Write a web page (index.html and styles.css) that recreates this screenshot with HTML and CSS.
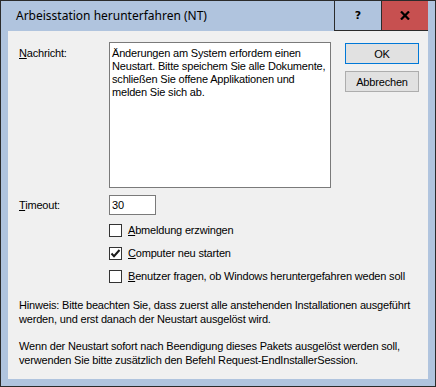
FILE: index.html
```html
<!DOCTYPE html>
<html lang="de">
<head>
    <meta charset="UTF-8">
    <meta name="viewport" content="width=device-width, initial-scale=1.0">
    <title>Arbeisstation herunterfahren (NT)</title>
    <link rel="stylesheet" href="styles.css">
</head>
<body>
    <main class="window">
        <header class="titlebar">
            <span class="title">Arbeisstation herunterfahren (NT)</span>
            <div class="caption">
                <div class="cap help">?</div>
                <div class="cap close">
                    <svg width="10" height="9" viewBox="0 0 10 9">
                        <path d="M1 0.5 L9 8.5 M9 0.5 L1 8.5" stroke="#000" stroke-width="2.2" fill="none"/>
                    </svg>
                </div>
            </div>
        </header>

        <section class="client">
            <div class="message-row">
                <label class="lbl msg-lbl"><u>N</u>achricht:</label>
                <div class="textbox">Änderungen am System erfordem einen<br>Neustart. Bitte speichem Sie alle Dokumente,<br>schließen Sie offene Applikationen und<br>melden Sie sich ab.</div>
                <div class="buttons">
                    <button class="btn default" type="button">OK</button>
                    <button class="btn" type="button">Abbrechen</button>
                </div>
            </div>

            <div class="timeout-row">
                <label class="lbl"><u>T</u>imeout:</label>
                <div class="input">30</div>
            </div>

            <div class="checks">
                <div class="check">
                    <span class="box"></span>
                    <span><u>A</u>bmeldung erzwingen</span>
                </div>
                <div class="check">
                    <span class="box">
                        <svg width="11" height="11" viewBox="0 0 11 11">
                            <path d="M1.5 5.5 L4 8.2 L9.5 2" stroke="#1a1a1a" stroke-width="2" fill="none"/>
                        </svg>
                    </span>
                    <span><u>C</u>omputer neu starten</span>
                </div>
                <div class="check">
                    <span class="box"></span>
                    <span><u>B</u>enutzer fragen, ob Windows heruntergefahren weden soll</span>
                </div>
            </div>

            <p class="hint">Hinweis: Bitte beachten Sie, dass zuerst alle anstehenden Installationen ausgeführt<br>werden, und erst danach der Neustart ausgelöst wird.</p>
            <p class="hint second">Wenn der Neustart sofort nach Beendigung dieses Pakets ausgelöst werden soll,<br>verwenden Sie bitte zusätzlich den Befehl Request-EndInstallerSession.</p>
        </section>
    </main>
</body>
</html>
```

FILE: styles.css
```css
body{
    margin: 0;
    padding: 0;
    background: #b0c4de;
}

.window{
    width: 436px;
    height: 387px;
    box-sizing: border-box;
    border: 1px solid #2b2b2b;
    background: #b0c4de;
    display: flex;
    flex-direction: column;
    font-family: "Liberation Sans", Arial, sans-serif;
    font-size: 11px;
    letter-spacing: -0.18px;
    color: #000;
}

.titlebar{
    height: 30px;
    display: flex;
    justify-content: space-between;
    align-items: flex-start;
}

.title{
    font-family: "Noto Sans", "Open Sans", sans-serif;
    font-size: 12px;
    letter-spacing: 0;
    line-height: 30px;
    margin-left: 15px;
    color: #000;
}

.caption{
    display: flex;
    margin-right: 7px;
    height: 30px;
    box-sizing: border-box;
    border-left: 1px solid #2b2b2b;
    border-bottom: 1px solid #2b2b2b;
}

.cap{
    display: flex;
    justify-content: center;
    align-items: center;
    height: 29px;
}

.help{
    width: 46px;
    border-right: 1px solid #2b2b2b;
    font-family: "DejaVu Sans", sans-serif;
    font-weight: bold;
    font-size: 11px;
    letter-spacing: 0;
}

.close{
    width: 46px;
    background: #c75050;
}

.client{
    margin: 0 7px 7px 7px;
    flex: 1;
    background: #f0f0f0;
    padding-left: 11px;
    display: flex;
    flex-direction: column;
}

.lbl{
    width: 90px;
    line-height: 13px;
    flex-shrink: 0;
}

.message-row{
    display: flex;
    margin-top: 11px;
    height: 146px;
}

.msg-lbl{
    margin-top: 5px;
}

.textbox{
    width: 222px;
    height: 146px;
    box-sizing: border-box;
    border: 1px solid #7a7a7a;
    background: #fff;
    padding: 4px 2px 0 2px;
    line-height: 13px;
    white-space: nowrap;
}

.buttons{
    display: flex;
    flex-direction: column;
    gap: 7px;
    margin-left: 14px;
    margin-top: 1px;
}

.btn{
    width: 74px;
    height: 21px;
    box-sizing: border-box;
    border: 1px solid #adadad;
    background: #e1e1e1;
    font-family: "Liberation Sans", Arial, sans-serif;
    font-size: 11px;
    letter-spacing: -0.18px;
    color: #000;
    padding: 0;
}

.btn.default{
    border-color: #0078d7;
}

.timeout-row{
    display: flex;
    align-items: center;
    margin-top: 7px;
    height: 20px;
}

.input{
    width: 47px;
    height: 20px;
    box-sizing: border-box;
    border: 1px solid #7a7a7a;
    background: #fff;
    padding: 3px 2px 0 2px;
    line-height: 13px;
}

.checks{
    display: flex;
    flex-direction: column;
    gap: 10px;
    margin-top: 9px;
    padding-left: 90px;
}

.check{
    display: flex;
    align-items: center;
    gap: 6px;
    height: 13px;
    line-height: 13px;
    white-space: nowrap;
}

.box{
    width: 13px;
    height: 13px;
    box-sizing: border-box;
    border: 1px solid #333;
    background: #fff;
    display: flex;
    justify-content: center;
    align-items: center;
}

.hint{
    margin: 15px 0 0 0;
    line-height: 14px;
    white-space: nowrap;
}

.hint.second{
    margin-top: 13px;
}
```
